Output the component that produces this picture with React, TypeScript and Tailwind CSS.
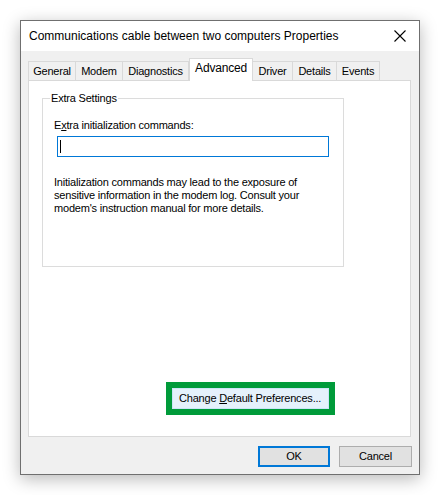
import React from "react";

const tabs: [string, number][] = [
  ["General", 48],
  ["Modem", 47],
  ["Diagnostics", 66],
  ["Advanced", 64],
  ["Driver", 40],
  ["Details", 44],
  ["Events", 43],
];

export default function App() {
  return (
    <div
      className="w-[440px] h-[495px] bg-white pt-[20px] pl-[20px] text-black text-[11px] tracking-[-0.2px] leading-[15px] whitespace-nowrap"
      style={{ fontFamily: '"Liberation Sans", Arial, sans-serif' }}
    >
      <div className="w-[400px] h-[455px] border border-[#6f6f6f] bg-[#f0f0f0] flex flex-col shadow-[0_4px_16px_rgba(0,0,0,0.28)]">
        {/* title bar */}
        <div className="h-[30px] bg-white flex items-center justify-between pl-[8px] pr-[10px]">
          <span className="text-[12px] tracking-normal">Communications cable between two computers Properties</span>
          <svg width="12" height="12" viewBox="0 0 12 12" className="mr-[3px]">
            <path d="M0.5 0.5 L11.5 11.5 M11.5 0.5 L0.5 11.5" stroke="#000" strokeWidth="1.1" />
          </svg>
        </div>
        {/* tabs */}
        <div className="pl-[7px] pr-[8px] pt-[7px] flex flex-col flex-1">
          <div className="flex items-end h-[22px]">
            {tabs.map(([t, w], i) => {
              const sel = t === "Advanced";
              return (
                <div
                  key={t}
                  style={{ width: w }}
                  className={
                    sel
                      ? "bg-white border border-[#d9d9d9] border-b-0 text-center pt-[2px] relative z-10 -mb-[1px] h-[23px] text-[12px]"
                      : `h-[19px] bg-[#f0f0f0] border border-[#d9d9d9] border-b-0 text-center pt-[2px] ${i > 0 ? "border-l-0" : ""}`
                  }
                >
                  {t}
                </div>
              );
            })}
          </div>
          <div className="h-[357px] bg-white border border-[#d9d9d9] pl-[13px] pt-[10px] flex flex-col">
            <fieldset className="w-[302px] min-w-0 h-[176px] border border-[#dcdcdc]">
              <legend className="px-[1px] ml-[7px]">Extra Settings</legend>
              <div className="pl-[11px]">
                <div className="mt-[12px]">
                  E<span className="underline">x</span>tra initialization commands:
                </div>
                <div className="ml-[3px] mt-[3px] w-[272px] h-[21px] border border-[#0078d7] flex items-center pl-[2px]">
                  <span className="w-[1px] h-[13px] bg-black" />
                </div>
                <p className="mt-[19px] leading-[13px]">
                  Initialization commands may lead to the exposure of
                  <br />
                  sensitive information in the modem log. Consult your
                  <br />
                  modem's instruction manual for more details.
                </p>
              </div>
            </fieldset>
            <div className="mt-[115px] ml-[124px] w-[169px] h-[33px] border-[6px] border-[#009b3a] flex">
              <div className="flex-1 bg-[#e5f1fb] border border-[#cce4f7] flex items-center pl-[6px]">
                <span>
                  Change <span className="underline">D</span>efault Preferences...
                </span>
              </div>
            </div>
          </div>
          <div className="flex justify-end gap-[9px] mt-[9px]">
            <div className="w-[72px] h-[21px] bg-[#e1e1e1] border-2 border-[#0078d7] flex items-center justify-center">
              OK
            </div>
            <div className="w-[73px] h-[21px] bg-[#e1e1e1] border border-[#adadad] flex items-center justify-center -mr-[1px]">
              Cancel
            </div>
          </div>
        </div>
      </div>
    </div>
  );
}
